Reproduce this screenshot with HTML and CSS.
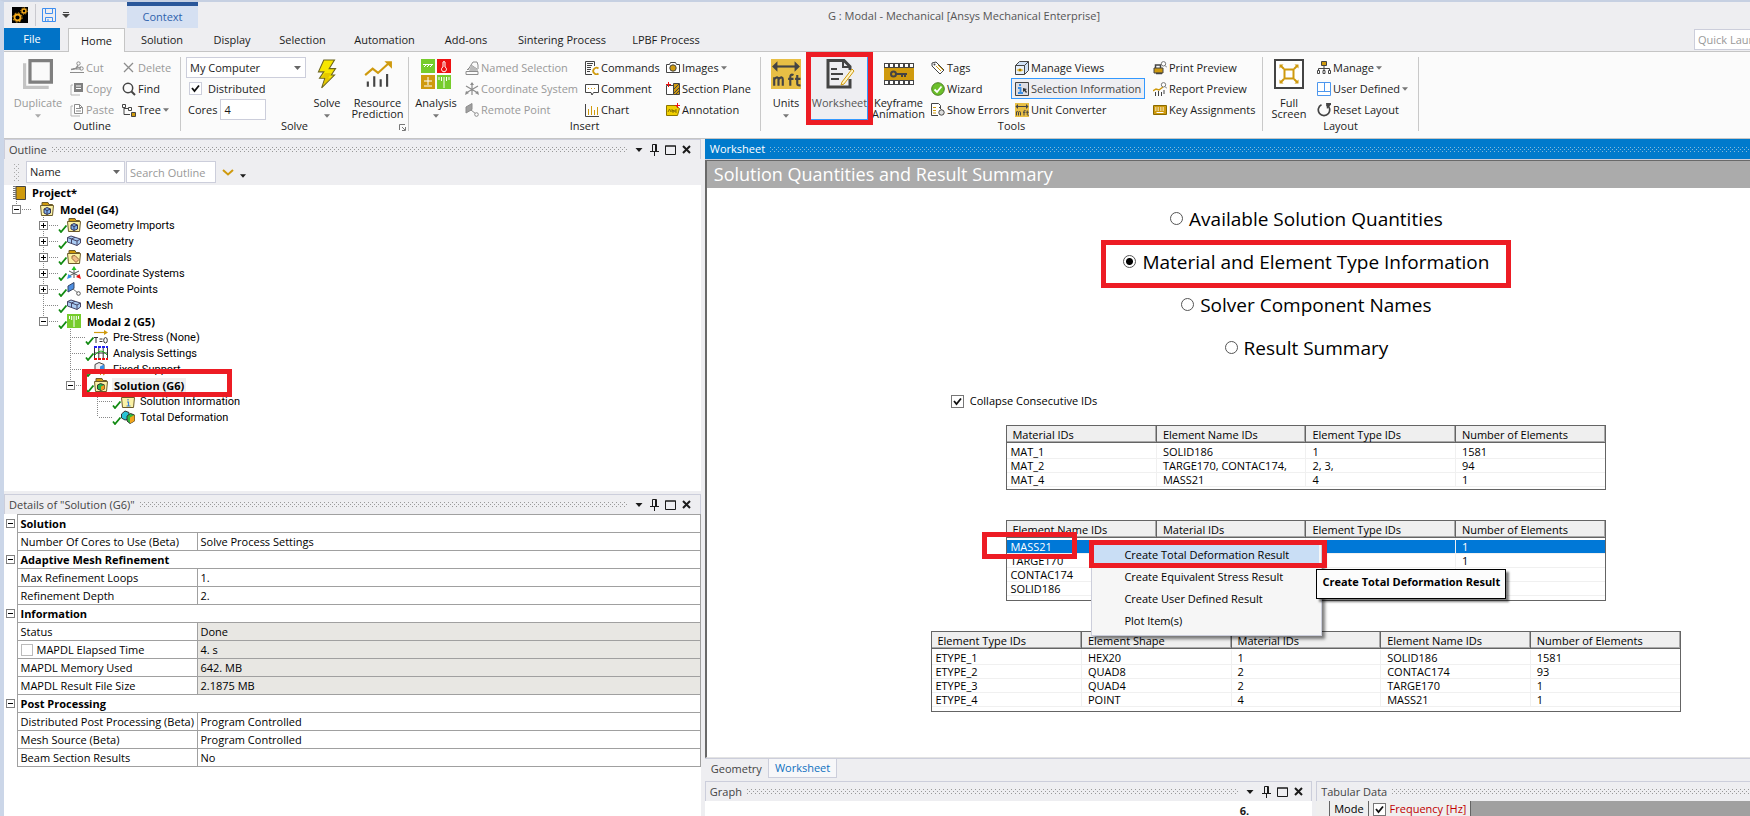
FILE: index.html
```html
<!DOCTYPE html>
<html lang="en">
<head>
    <meta charset="UTF-8">
    <meta name="viewport" content="width=device-width, initial-scale=1.0">
    <title>G : Modal - Mechanical [Ansys Mechanical Enterprise]</title>
    <link rel="stylesheet" href="styles.css">
</head>
<body>
    <!-- icon set -->
    <svg class="sprite" width="0" height="0" aria-hidden="true">
        <symbol id="i-arrow" viewBox="0 0 7 4"><path d="M0 0h7L3.500 4z" fill="currentColor"/></symbol>
        <symbol id="i-cut" viewBox="0 0 14 14"><path d="M0 11.500h14M3 8l8-2M6 8l5 0" stroke="#8c8c8c" fill="none"/><circle cx="8.500" cy="2.500" r="1.700" stroke="#8c8c8c" fill="none"/><circle cx="11.500" cy="7.500" r="1.700" stroke="#8c8c8c" fill="none"/><path d="M1 8.500l5-1 2-3" stroke="#8c8c8c" fill="none" stroke-width="1.500"/></symbol>
        <symbol id="i-copy" viewBox="0 0 14 14"><path d="M3 3H1v10h9" stroke="#b5b5b5" fill="none"/><path d="M4 1h9v9H4z" fill="#7f7f7f"/><path d="M6 4h5M6 6.500h5" stroke="#fff"/></symbol>
        <symbol id="i-paste" viewBox="0 0 14 14"><path d="M3 3H1v10h9" stroke="#b5b5b5" fill="none"/><path d="M4.500 1.500h5l3 3v6h-8z" fill="#fff" stroke="#8c8c8c"/><path d="M6 5.500h5M6 8h5M9.500 1.500v3h3" stroke="#8c8c8c" fill="none"/></symbol>
        <symbol id="i-delete" viewBox="0 0 14 14"><path d="M2 2l9 9M11 2l-9 9" stroke="#8c8c8c" stroke-width="1.300"/></symbol>
        <symbol id="i-find" viewBox="0 0 14 14"><circle cx="6" cy="6" r="4.700" fill="none" stroke="#444" stroke-width="1.500"/><path d="M9.500 9.500L13 13" stroke="#444" stroke-width="2"/></symbol>
        <symbol id="i-tree" viewBox="0 0 14 14"><path d="M.5 1.500h3v3h-3zM2 5v6.500h6M2 5.500h4" fill="none" stroke="#444"/><path d="M6.500 4.500h3v3h-3z" fill="#fff" stroke="#444"/><path d="M9.500 9.500h4v4h-4z" fill="#cf9a0e" stroke="#444"/></symbol>
        <symbol id="i-dup" viewBox="0 0 28 28"><path d="M0 4h3v21h21v3H0z" fill="#c4c4c4"/><path d="M6.500 1.500h20v20h-20z" fill="#fafafa" stroke="#7f7f7f" stroke-width="3"/></symbol>
        <symbol id="i-bolt" viewBox="0 0 20 28"><path d="M7 1h10l-5 8h6l-4 6h3L5 27l3-9H3l4-6H2z" fill="#f7e600" stroke="#6b6420"/><path d="M8 13h6l-3 5h3l-8 7 3-8H5z" fill="#d9b400" opacity=".6"/></symbol>
        <symbol id="i-resource" viewBox="0 0 28 26"><path d="M2 14l7-6 5 4 10-9" fill="none" stroke="#cf9a0e" stroke-width="2"/><path d="M20 1h7v7z" fill="#cf9a0e"/><path d="M4.500 20v5M10.500 15v10M16.500 18v7M22.500 13v12" stroke="#444" stroke-width="2"/></symbol>
        <symbol id="i-analysis" viewBox="0 0 30 30"><path d="M0 0h14v14H0z" fill="#76cc2c"/><path d="M16 0h14v14H16z" fill="#ee1111"/><path d="M0 16h14v14H0z" fill="#cf9a0e"/><path d="M16 16h14v14H16z" fill="#76cc2c"/><path d="M2 5.500h10M3 8l2-2M6 8l2-2M9 8l2-2M3 27h8M3 22h8M7 18v8M18 18v3M20.500 18v4M23 18v11M25.500 18v4M28 18v3" stroke="#fff" fill="none"/><path d="M22 3a1.500 1.500 0 0 1 2 0v5a2.500 2.500 0 1 1-2 0z" fill="none" stroke="#fff"/></symbol>
        <symbol id="i-named" viewBox="0 0 14 14"><path d="M1 10.500h12v3H1zM3 9l3-5 6 4v2M4 7l-2 2M6 4l2-3h4l1 3v4" fill="none" stroke="#8c8c8c"/><path d="M6 4l6 4-1 2H4z" fill="#bbb"/></symbol>
        <symbol id="i-coordg" viewBox="0 0 14 14"><path d="M7 1v12M1 4l12 7M13 4L1 11" stroke="#8c8c8c" stroke-width="1.200"/><path d="M5 3l2-3 2 3zM0 13l1-4 3 2zM14 13l-1-4-3 2z" fill="#8c8c8c"/></symbol>
        <symbol id="i-remoteg" viewBox="0 0 14 14"><path d="M1 4l6-3.500v6L1 10z" fill="#a0a0a0" stroke="#8c8c8c"/><path d="M6 7l5 4" stroke="#8c8c8c"/><circle cx="11.500" cy="11.500" r="1.800" fill="#fff" stroke="#8c8c8c"/></symbol>
        <symbol id="i-cmd" viewBox="0 0 14 14"><path d="M7 13.500H.5v-13h9V5" fill="none" stroke="#444"/><path d="M2 2.500h6M2 4.500h5M2 6.500h4M2 8.500h4M2 10.500h3" stroke="#444"/><path d="M13.500 7.500a3.200 3.200 0 1 0 0 5" fill="none" stroke="#cf9a0e" stroke-width="1.800"/></symbol>
        <symbol id="i-comment" viewBox="0 0 14 14"><path d="M.5 2.500h13v8h-5L7 13l-1-2.500H.5z" fill="#fff" stroke="#444"/><path d="M3 6.500h8" stroke="#cf9a0e" stroke-dasharray="1 2"/></symbol>
        <symbol id="i-chart" viewBox="0 0 14 14"><path d="M.5 1v12.500H14" fill="none" stroke="#444"/><path d="M3.500 6v6M6.500 3v9M9.500 7v5M12.500 4v8" stroke="#cf9a0e"/></symbol>
        <symbol id="i-images" viewBox="0 0 14 14"><path d="M.5 3.500h3l1-2h5l1 2h3v8H.500z" fill="#fff" stroke="#444"/><circle cx="7" cy="7" r="3.200" fill="#cf9a0e" stroke="#444"/></symbol>
        <symbol id="i-section" viewBox="0 0 14 14"><path d="M.5 3.500h7v9h-7z" fill="#fff" stroke="#444"/><path d="M7.500 1.500h6v11h-6z" fill="#cf9a0e" stroke="#444"/><path d="M8 7l5-5M8 11l5-5M10 12l3-3" stroke="#444"/><path d="M0 2.500h5M2.500 0v5" stroke="#e11"/></symbol>
        <symbol id="i-annot" viewBox="0 0 14 14"><path d="M.5 2.500h9l4 3-2 7H.500z" fill="#f0cf00" stroke="#8a7400"/><path d="M2 9l1.500-3L5 9M6 6v3h2V7.500H6M11 7H9v2h2" stroke="#8a7400" fill="none"/><path d="M9 2.500h5M11.500 0v5" stroke="#e11"/></symbol>
        <symbol id="i-units" viewBox="0 0 28 28"><path d="M0 0h28v28H0z" fill="#e8bf45"/><path d="M3 7h22" stroke="#444" stroke-width="2"/><path d="M6 2L1 7l5 5zM22 2l5 5-5 5z" fill="#444"/><path d="M3 25v-8M3 19c2-3 4-2 4 0v6M7 19c2-3 4-2 4 0v6M21 15c-2-1-3 0-3 2v8M16 18.500h5M24.500 15v8q0 2 3 1.500M22.500 18.500h5" stroke="#444" stroke-width="2" fill="none"/></symbol>
        <symbol id="i-sheet" viewBox="0 0 28 30"><path d="M24 20v8H2V1.500h16l6 6V11" fill="none" stroke="#444" stroke-width="3"/><path d="M17 1v7h7" fill="none" stroke="#444" stroke-width="2"/><path d="M5 10h6M5 15h12M5 20h8" stroke="#444" stroke-width="2"/><path d="M26 10l2 2-10 13-3 1 1-3z" fill="#fff3c4" stroke="#cf9a0e"/></symbol>
        <symbol id="i-key" viewBox="0 0 30 22"><path d="M0 0h30v22H0z" fill="#444"/><path d="M0 5h30v12H0z" fill="#cf9a0e"/><path d="M1 2.500h28M1 19.500h28" stroke="#fff" stroke-width="3" stroke-dasharray="3 2"/><circle cx="9.500" cy="11" r="2.500" fill="none" stroke="#444" stroke-width="2"/><path d="M12 11h11M18 11v3M21 11v3" stroke="#444" stroke-width="2"/></symbol>
        <symbol id="i-tags" viewBox="0 0 14 14"><path d="M1 2l4-1 8 8-4 4-8-8z" fill="#fff" stroke="#444"/><path d="M5 5l5 5M7 4l5 5" stroke="#cf9a0e"/><circle cx="3.500" cy="3.500" r="1" fill="#444"/></symbol>
        <symbol id="i-wizard" viewBox="0 0 14 14"><circle cx="7" cy="7" r="6.300" fill="#6bbf2a" stroke="#4a7f22"/><path d="M3.500 7.500L6 10l4.500-5.500" fill="none" stroke="#fff" stroke-width="1.800"/></symbol>
        <symbol id="i-errors" viewBox="0 0 14 14"><path d="M7 12.500H.5V.5h7l2 2V5" fill="#fff" stroke="#444"/><path d="M2 4.500h3M2 7.500h3M2 10h3" stroke="#cf9a0e"/><circle cx="10.500" cy="9.500" r="2.700" fill="#ddd" stroke="#444"/><path d="M8 4l2.500 2.500" stroke="#444"/></symbol>
        <symbol id="i-views" viewBox="0 0 14 14"><path d="M.5 4.500l4-4h9v9l-4 4v-9zM9.500 4.500l4-4" fill="#cfe0f6" stroke="#444"/><path d="M.5 4.500h9v9h-9z" fill="#e6effb" stroke="#444"/><path d="M1.500 9Q5 6 8.500 9 5 12 1.500 9z" fill="#e8bf45"/><circle cx="5" cy="9" r="1.200" fill="#a37b00"/></symbol>
        <symbol id="i-selinfo" viewBox="0 0 14 14"><path d="M.5.5h13v13H.5z" fill="#dcdce2" stroke="#444"/><path d="M3 6h2.500v5M3 11h5M4 3h2" stroke="#3a8ee6" stroke-width="1.800" fill="none"/><path d="M8 6l4 1-1.500 1L12 10l-1 1-1.500-2L8 10z" fill="#333"/></symbol>
        <symbol id="i-print" viewBox="0 0 14 14"><path d="M1 7h9v5H1z" fill="#cf9a0e" stroke="#444"/><path d="M2.500 7V4h5v3M3 12.500h6" fill="none" stroke="#444" stroke-width="1.500"/><circle cx="10.500" cy="2.800" r="2.200" fill="#fff" stroke="#777"/><path d="M12 4.500l2 2" stroke="#777"/></symbol>
        <symbol id="i-report" viewBox="0 0 14 14"><path d="M2.500 10v4M5.500 9v5M8.500 10v4M11 8v4" stroke="#444"/><path d="M0 9l3-2 3 1 4-3" stroke="#cf9a0e" stroke-width="1.500" fill="none"/><circle cx="10.500" cy="2.800" r="2.200" fill="#fff" stroke="#777"/><path d="M12 4.500l2 2" stroke="#777"/></symbol>
        <symbol id="i-keys" viewBox="0 0 14 14"><path d="M.5 2.500h13v9H.5z" fill="#cf9a0e" stroke="#8a6a00"/><path d="M2 5h10M2 7h10" stroke="#fff" stroke-dasharray="1.500 1"/><path d="M3.500 9.500h7" stroke="#fff"/></symbol>
        <symbol id="i-full" viewBox="0 0 30 30"><path d="M1 1h28v28H1z" fill="#fff" stroke="#444" stroke-width="2"/><path d="M10.500 10.500h9v9h-9z" fill="none" stroke="#cf9a0e" stroke-width="2"/><path d="M10 10L7 7M20 10l3-3M10 20l-3 3M20 20l3 3" stroke="#cf9a0e" stroke-width="2"/><path d="M5.500 5.500h4l-4 4zM24.500 5.500h-4l4 4zM5.500 24.500h4l-4-4zM24.500 24.500h-4l4-4z" fill="#cf9a0e"/></symbol>
        <symbol id="i-manage" viewBox="0 0 14 14"><path d="M4.500.5h5v4h-5z" fill="#cf9a0e" stroke="#444"/><path d="M7 5v5M1.500 10V7.500h11V10" fill="none" stroke="#444"/><path d="M.5 9.500h2v3h-2zM6 9.500h2v3H6zM11.500 9.500h2v3h-2z" fill="#fff" stroke="#444"/></symbol>
        <symbol id="i-user" viewBox="0 0 14 14"><path d="M.5.5h13v13H.5zM.5 9.500h13M7.500.5v9" fill="#fff" stroke="#4d97ee"/></symbol>
        <symbol id="i-reset" viewBox="0 0 14 14"><path d="M4.500 1.800a5.700 5.700 0 1 0 5 0" fill="none" stroke="#444" stroke-width="1.700"/><path d="M9 0h5v1.500L10 6z" fill="#444"/></symbol>
        <symbol id="i-gears" viewBox="0 0 16 16"><path d="M0 0h16v16H0z" fill="#000"/><circle cx="5.500" cy="10.500" r="3" fill="none" stroke="#f6ab1a" stroke-width="1.800"/><circle cx="5.500" cy="10.500" r="4.600" fill="none" stroke="#f6ab1a" stroke-dasharray="1.800 1.800"/><circle cx="12" cy="4" r="2" fill="none" stroke="#f6ab1a" stroke-width="1.400"/><circle cx="12" cy="4" r="3.200" fill="none" stroke="#f6ab1a" stroke-dasharray="1.200 1.200"/></symbol>
        <symbol id="i-save" viewBox="0 0 14 14"><path d="M.5.5h13v13H.5zM3.500.5v5h7v-5M3.500 13.500v-4h7v4M6 11v2" fill="none" stroke="#3f8ff0"/></symbol>
        <symbol id="i-more" viewBox="0 0 8 6"><path d="M1 .5h6" stroke="#444"/><path d="M0 2h8L4 6z" fill="#444"/></symbol>
        <symbol id="i-launch" viewBox="0 0 7 7"><path d="M.5 6V.5H6M3 3l3 3M6.500 3v3.500H3" fill="none" stroke="#777"/></symbol>
        <symbol id="i-pin" viewBox="0 0 9 12"><path d="M2.500 7V.5h4V7M0 7.500h9M4.500 8v4" fill="none" stroke="#1b1b1b"/><path d="M5.500 1v6" stroke="#1b1b1b"/></symbol>
        <symbol id="i-max" viewBox="0 0 11 10"><path d="M.5 1h10v8.500H.5z" fill="none" stroke="#1b1b1b"/><path d="M0 1h11" stroke="#1b1b1b"/></symbol>
        <symbol id="i-close" viewBox="0 0 9 9"><path d="M1 1l7 7M8 1L1 8" stroke="#1b1b1b" stroke-width="2"/></symbol>
        <symbol id="i-chev" viewBox="0 0 12 7"><path d="M1 1l5 4.500L11 1" fill="none" stroke="#cf9a0e" stroke-width="2"/></symbol>
        <!-- tree icons -->
        <symbol id="t-tick" viewBox="0 0 9 8"><path d="M1 4.500l2 2.500L8.500 .5" fill="none" stroke="#118a11" stroke-width="1.800"/></symbol>
        <symbol id="t-project" viewBox="0 0 14 14"><path d="M4 .5h9.500v13H4z" fill="#cf9a0e" stroke="#444"/><path d="M2.500 0v14" stroke="#777" stroke-width="3" stroke-dasharray="1 1"/></symbol>
        <symbol id="t-folder" viewBox="0 0 14 14"><path d="M2 3V.5h6L9 2.500h3.500V5" fill="#cf9a0e" stroke="#6b5a2a"/><path d="M.5 3.500h13l-1 10h-11z" fill="#fbf2a6" stroke="#6b5a2a"/></symbol>
        <symbol id="t-model" viewBox="0 0 14 14"><use href="#t-folder"/><path d="M4 7l3-1.500L10.500 7v4L7 12.500 4 11z" fill="#7fb1ee" stroke="#335"/><path d="M4 7l3 1.500L10.500 7M7 8.500v4" stroke="#335" fill="none"/></symbol>
        <symbol id="t-geom" viewBox="0 0 14 14"><path d="M.5 3.500L4 2l9.500 3v4L10 11.500.5 8z" fill="#a9cbf3" stroke="#446"/><path d="M.5 3.500L10 7l3.500-2M10 7v4.500M4.500 5v4.500M8 3.300L4.500 5" fill="none" stroke="#446"/></symbol>
        <symbol id="t-mat" viewBox="0 0 14 14"><use href="#t-folder"/><path d="M5 6l3-.5 4 4-3 3-4-4z" fill="#f0bd8a" stroke="#9a6a3a"/></symbol>
        <symbol id="t-coord" viewBox="0 0 14 14"><path d="M7 3v9M2 5l10 5M12 5L2 10" stroke="#555"/><path d="M4.500 4L7 0l2.500 4z" fill="#20c020"/><path d="M0 13l1.500-5L5 11z" fill="#3a8ee6"/><path d="M14 13l-1.500-5L9 11z" fill="#e11"/></symbol>
        <symbol id="t-remote" viewBox="0 0 14 14"><path d="M1 4l6-3.500v6L1 10z" fill="#4d8ee0" stroke="#346"/><path d="M6 7l5 4" stroke="#777"/><circle cx="11.500" cy="11.500" r="1.800" fill="#fff" stroke="#555"/></symbol>
        <symbol id="t-modal" viewBox="0 0 14 14"><path d="M0 0h14v14H0z" fill="#76cc2c"/><path d="M2.500 2v3M4.700 2v4M7 2v11M9.300 2v4M11.500 2v3" stroke="#fff"/></symbol>
        <symbol id="t-pre" viewBox="0 0 14 14"><path d="M0 2.500h11" stroke="#cf9a0e" stroke-width="1.200"/><path d="M10 0l4 2.500L10 5z" fill="#cf9a0e"/><path d="M0 7.500h4M2 7.500V13M5.500 9h3M5.500 11.500h3" stroke="#333"/><ellipse cx="11.500" cy="10.300" rx="1.800" ry="2.700" fill="none" stroke="#333"/></symbol>
        <symbol id="t-set" viewBox="0 0 14 14"><path d="M.5 2v10M4.800 2v10M9.200 2v10M13.500 2v10M0 7h14" stroke="#333"/><path d="M0 1h14" stroke="#22e" stroke-width="2" stroke-dasharray="3 1"/><path d="M0 13h14" stroke="#e11" stroke-width="2" stroke-dasharray="3 1"/><path d="M1 9q6-8 12 0" fill="none" stroke="#2b2"/></symbol>
        <symbol id="t-fixed" viewBox="0 0 14 14"><path d="M1 2.500L5 .5l5 2v7l-4 2-5-2z" fill="#eee" stroke="#444"/><path d="M6 4.500l4-2v7l-4 2z" fill="#3a8ee6"/><path d="M6 13l2-2M9 13l3-2" stroke="#cf9a0e"/></symbol>
        <symbol id="t-sol" viewBox="0 0 14 14"><use href="#t-folder"/><path d="M3.500 7l3-1.500 4 1.500v4L7 12.500 3.500 11z" fill="#27b04c" stroke="#333"/><path d="M7 8.500l3.500-1.500v4L7 12.500z" fill="#f29b1d"/></symbol>
        <symbol id="t-info" viewBox="0 0 14 14"><use href="#t-folder"/><path d="M7 5v1.500M6 8h1.500v4M5.500 12h4" stroke="#3a7ed6" stroke-width="1.200" fill="none"/></symbol>
        <symbol id="t-def" viewBox="0 0 14 14"><path d="M.5 4L4 1l4 1.500V9L4 10 .5 8z" fill="#2bc3d6" stroke="#333"/><path d="M6 6l3.500-2.500 4 1.500v6L9 13.500 6 11z" fill="#31b83c" stroke="#333"/><path d="M9 7.500L13.500 5v6L9 13.500z" fill="#f2a51d"/></symbol>
    </svg>

    <div class="app">
        <header class="title-bar">
            <svg class="logo"><use href="#i-gears"/></svg>
            <div class="quick">
                <button aria-label="Save"><svg class="ic"><use href="#i-save"/></svg></button>
                <button aria-label="More"><svg class="more"><use href="#i-more"/></svg></button>
            </div>
            <div class="context-tab">Context</div>
            <h1>G : Modal - Mechanical [Ansys Mechanical Enterprise]</h1>
        </header>
        <nav class="tabs">
            <button class="file">File</button>
            <button class="active">Home</button>
            <button>Solution</button>
            <button>Display</button>
            <button>Selection</button>
            <button>Automation</button>
            <button>Add-ons</button>
            <button>Sintering Process</button>
            <button>LPBF Process</button>
            <input class="launch" type="text" placeholder="Quick Launch" aria-label="Quick Launch">
        </nav>

        <div class="ribbon">
            <section class="group g-outline">
                <div class="tools">
                    <button class="big off"><svg class="i28"><use href="#i-dup"/></svg><span>Duplicate</span><svg class="dd"><use href="#i-arrow"/></svg></button>
                    <div class="col">
                        <button class="sm off"><svg class="ic"><use href="#i-cut"/></svg>Cut</button>
                        <button class="sm off"><svg class="ic"><use href="#i-copy"/></svg>Copy</button>
                        <button class="sm off"><svg class="ic"><use href="#i-paste"/></svg>Paste</button>
                    </div>
                    <div class="col">
                        <button class="sm off"><svg class="ic"><use href="#i-delete"/></svg>Delete</button>
                        <button class="sm"><svg class="ic"><use href="#i-find"/></svg>Find</button>
                        <button class="sm"><svg class="ic"><use href="#i-tree"/></svg>Tree<svg class="dd"><use href="#i-arrow"/></svg></button>
                    </div>
                </div>
                <h2>Outline</h2>
            </section>
            <section class="group g-solve">
                <div class="tools">
                    <div class="col form">
                        <select class="computer" aria-label="Solve on"><option>My Computer</option></select>
                        <label class="dist"><input type="checkbox" checked>Distributed</label>
                        <label class="cores">Cores<input type="text" value="4"></label>
                    </div>
                    <button class="big"><svg class="i28"><use href="#i-bolt"/></svg><span>Solve</span><svg class="dd"><use href="#i-arrow"/></svg></button>
                    <button class="big"><svg class="i28"><use href="#i-resource"/></svg><span>Resource Prediction</span></button>
                </div>
                <h2>Solve</h2>
                <button class="expand" aria-label="Solve options"><svg><use href="#i-launch"/></svg></button>
            </section>
            <section class="group g-insert">
                <div class="tools">
                    <button class="big"><svg class="i28"><use href="#i-analysis"/></svg><span>Analysis</span><svg class="dd"><use href="#i-arrow"/></svg></button>
                    <div class="col">
                        <button class="sm off"><svg class="ic"><use href="#i-named"/></svg>Named Selection</button>
                        <button class="sm off"><svg class="ic"><use href="#i-coordg"/></svg>Coordinate System</button>
                        <button class="sm off"><svg class="ic"><use href="#i-remoteg"/></svg>Remote Point</button>
                    </div>
                    <div class="col">
                        <button class="sm"><svg class="ic"><use href="#i-cmd"/></svg>Commands</button>
                        <button class="sm"><svg class="ic"><use href="#i-comment"/></svg>Comment</button>
                        <button class="sm"><svg class="ic"><use href="#i-chart"/></svg>Chart</button>
                    </div>
                    <div class="col">
                        <button class="sm"><svg class="ic"><use href="#i-images"/></svg>Images<svg class="dd"><use href="#i-arrow"/></svg></button>
                        <button class="sm"><svg class="ic"><use href="#i-section"/></svg>Section Plane</button>
                        <button class="sm"><svg class="ic"><use href="#i-annot"/></svg>Annotation</button>
                    </div>
                </div>
                <h2>Insert</h2>
            </section>
            <section class="group g-tools">
                <div class="tools">
                    <button class="big"><svg class="i28"><use href="#i-units"/></svg><span>Units</span><svg class="dd"><use href="#i-arrow"/></svg></button>
                    <button class="big pressed marked"><svg class="i28"><use href="#i-sheet"/></svg><span>Worksheet</span></button>
                    <button class="big"><svg class="i28"><use href="#i-key"/></svg><span>Keyframe Animation</span></button>
                    <div class="col">
                        <button class="sm"><svg class="ic"><use href="#i-tags"/></svg>Tags</button>
                        <button class="sm"><svg class="ic"><use href="#i-wizard"/></svg>Wizard</button>
                        <button class="sm"><svg class="ic"><use href="#i-errors"/></svg>Show Errors</button>
                    </div>
                    <div class="col">
                        <button class="sm"><svg class="ic"><use href="#i-views"/></svg>Manage Views</button>
                        <button class="sm toggled"><svg class="ic"><use href="#i-selinfo"/></svg>Selection Information</button>
                        <button class="sm"><svg class="ic"><use href="#i-units"/></svg>Unit Converter</button>
                    </div>
                    <div class="col">
                        <button class="sm"><svg class="ic"><use href="#i-print"/></svg>Print Preview</button>
                        <button class="sm"><svg class="ic"><use href="#i-report"/></svg>Report Preview</button>
                        <button class="sm"><svg class="ic"><use href="#i-keys"/></svg>Key Assignments</button>
                    </div>
                </div>
                <h2>Tools</h2>
            </section>
            <section class="group g-layout">
                <div class="tools">
                    <button class="big"><svg class="i28"><use href="#i-full"/></svg><span>Full Screen</span></button>
                    <div class="col">
                        <button class="sm"><svg class="ic"><use href="#i-manage"/></svg>Manage<svg class="dd"><use href="#i-arrow"/></svg></button>
                        <button class="sm"><svg class="ic"><use href="#i-user"/></svg>User Defined<svg class="dd"><use href="#i-arrow"/></svg></button>
                        <button class="sm"><svg class="ic"><use href="#i-reset"/></svg>Reset Layout</button>
                    </div>
                </div>
                <h2>Layout</h2>
            </section>
        </div>

        <main class="workspace">
            <div class="left">
                <section class="panel">
                    <div class="panel-head">
                        <h2>Outline</h2><span class="dots"></span>
                        <button aria-label="Menu"><svg class="w-menu"><use href="#i-arrow"/></svg></button>
                        <button aria-label="Pin"><svg class="w-pin"><use href="#i-pin"/></svg></button>
                        <button aria-label="Maximize"><svg class="w-max"><use href="#i-max"/></svg></button>
                        <button aria-label="Close"><svg class="w-close"><use href="#i-close"/></svg></button>
                    </div>
                    <div class="filter">
                        <span class="grip"></span>
                        <select aria-label="Filter by"><option>Name</option></select>
                        <input type="text" placeholder="Search Outline" aria-label="Search Outline">
                        <button aria-label="Expand"><svg class="chev"><use href="#i-chev"/></svg></button>
                        <button class="low" aria-label="Options"><svg class="w-opt"><use href="#i-arrow"/></svg></button>
                    </div>
                    <div class="tree">
                        <div class="root"><svg class="ic"><use href="#t-project"/></svg><b>Project*</b></div>
                        <ul>
                            <li>
                                <div class="node"><i class="box minus"></i><i class="dash"></i><svg class="tick"></svg><svg class="ic"><use href="#t-model"/></svg><b>Model (G4)</b></div>
                                <ul>
                                    <li><div class="node"><i class="box plus"></i><i class="dash"></i><svg class="tick"><use href="#t-tick"/></svg><svg class="ic"><use href="#t-model"/></svg><span>Geometry Imports</span></div></li>
                                    <li><div class="node"><i class="box plus"></i><i class="dash"></i><svg class="tick"><use href="#t-tick"/></svg><svg class="ic"><use href="#t-geom"/></svg><span>Geometry</span></div></li>
                                    <li><div class="node"><i class="box plus"></i><i class="dash"></i><svg class="tick"><use href="#t-tick"/></svg><svg class="ic"><use href="#t-mat"/></svg><span>Materials</span></div></li>
                                    <li><div class="node"><i class="box plus"></i><i class="dash"></i><svg class="tick"><use href="#t-tick"/></svg><svg class="ic"><use href="#t-coord"/></svg><span>Coordinate Systems</span></div></li>
                                    <li><div class="node"><i class="box plus"></i><i class="dash"></i><svg class="tick"><use href="#t-tick"/></svg><svg class="ic"><use href="#t-remote"/></svg><span>Remote Points</span></div></li>
                                    <li><div class="node"><i class="dash long"></i><svg class="tick"><use href="#t-tick"/></svg><svg class="ic"><use href="#t-geom"/></svg><span>Mesh</span></div></li>
                                    <li>
                                        <div class="node"><i class="box minus"></i><i class="dash"></i><svg class="tick"><use href="#t-tick"/></svg><svg class="ic"><use href="#t-modal"/></svg><b>Modal 2 (G5)</b></div>
                                        <ul>
                                            <li><div class="node"><i class="dash long"></i><svg class="tick"><use href="#t-tick"/></svg><svg class="ic"><use href="#t-pre"/></svg><span>Pre-Stress (None)</span></div></li>
                                            <li><div class="node"><i class="dash long"></i><svg class="tick"><use href="#t-tick"/></svg><svg class="ic"><use href="#t-set"/></svg><span>Analysis Settings</span></div></li>
                                            <li><div class="node"><i class="dash long"></i><svg class="tick"><use href="#t-tick"/></svg><svg class="ic"><use href="#t-fixed"/></svg><span>Fixed Support</span></div></li>
                                            <li>
                                                <div class="node marked"><i class="box minus"></i><i class="dash"></i><svg class="tick"><use href="#t-tick"/></svg><svg class="ic"><use href="#t-sol"/></svg><b class="sel">Solution (G6)</b></div>
                                                <ul>
                                                    <li><div class="node"><i class="dash long"></i><svg class="tick"><use href="#t-tick"/></svg><svg class="ic"><use href="#t-info"/></svg><span>Solution Information</span></div></li>
                                                    <li><div class="node"><i class="dash long"></i><svg class="tick"><use href="#t-tick"/></svg><svg class="ic"><use href="#t-def"/></svg><span>Total Deformation</span></div></li>
                                                </ul>
                                            </li>
                                        </ul>
                                    </li>
                                </ul>
                            </li>
                        </ul>
                    </div>
                </section>

                <section class="panel">
                    <div class="panel-head">
                        <h2>Details of "Solution (G6)"</h2><span class="dots"></span>
                        <button aria-label="Menu"><svg class="w-menu"><use href="#i-arrow"/></svg></button>
                        <button aria-label="Pin"><svg class="w-pin"><use href="#i-pin"/></svg></button>
                        <button aria-label="Maximize"><svg class="w-max"><use href="#i-max"/></svg></button>
                        <button aria-label="Close"><svg class="w-close"><use href="#i-close"/></svg></button>
                    </div>
                    <div class="details">
                        <table>
                            <colgroup><col class="c-box"><col class="c-name"><col></colgroup>
                            <tr><td><i class="box minus"></i></td><th colspan="2">Solution</th></tr>
                            <tr><td></td><td>Number Of Cores to Use (Beta)</td><td>Solve Process Settings</td></tr>
                            <tr><td><i class="box minus"></i></td><th colspan="2">Adaptive Mesh Refinement</th></tr>
                            <tr><td></td><td>Max Refinement Loops</td><td>1.</td></tr>
                            <tr><td></td><td>Refinement Depth</td><td>2.</td></tr>
                            <tr><td><i class="box minus"></i></td><th colspan="2">Information</th></tr>
                            <tr class="ro"><td></td><td>Status</td><td>Done</td></tr>
                            <tr class="ro"><td></td><td><label><input type="checkbox">MAPDL Elapsed Time</label></td><td>4. s</td></tr>
                            <tr class="ro"><td></td><td>MAPDL Memory Used</td><td>642. MB</td></tr>
                            <tr class="ro"><td></td><td>MAPDL Result File Size</td><td>2.1875 MB</td></tr>
                            <tr><td><i class="box minus"></i></td><th colspan="2">Post Processing</th></tr>
                            <tr><td></td><td>Distributed Post Processing (Beta)</td><td>Program Controlled</td></tr>
                            <tr><td></td><td>Mesh Source (Beta)</td><td>Program Controlled</td></tr>
                            <tr><td></td><td>Beam Section Results</td><td>No</td></tr>
                        </table>
                    </div>
                </section>
            </div>

            <div class="right">
                <section class="sheet">
                    <div class="panel-head blue"><h2>Worksheet</h2><span class="dots"></span></div>
                    <div class="sheet-body">
                        <h3>Solution Quantities and Result Summary</h3>
                        <div class="doc">
                            <div class="radios">
                                <label><input type="radio" name="view">Available Solution Quantities</label>
                                <label class="marked"><input type="radio" name="view" checked>Material and Element Type Information</label>
                                <label><input type="radio" name="view">Solver Component Names</label>
                                <label><input type="radio" name="view">Result Summary</label>
                            </div>
                            <label class="collapse"><input type="checkbox" checked>Collapse Consecutive IDs</label>

                            <table class="list">
                                <thead><tr><th>Material IDs</th><th>Element Name IDs</th><th>Element Type IDs</th><th>Number of Elements</th></tr></thead>
                                <tbody>
                                    <tr><td>MAT_1</td><td>SOLID186</td><td>1</td><td>1581</td></tr>
                                    <tr><td>MAT_2</td><td>TARGE170, CONTAC174,</td><td>2, 3,</td><td>94</td></tr>
                                    <tr><td>MAT_4</td><td>MASS21</td><td>4</td><td>1</td></tr>
                                </tbody>
                            </table>

                            <div class="with-menu">
                                <table class="list tall">
                                    <thead><tr><th>Element Name IDs</th><th>Material IDs</th><th>Element Type IDs</th><th>Number of Elements</th></tr></thead>
                                    <tbody>
                                        <tr class="selected"><td class="marked">MASS21</td><td></td><td></td><td>1</td></tr>
                                        <tr><td>TARGE170</td><td></td><td></td><td>1</td></tr>
                                        <tr><td>CONTAC174</td><td></td><td></td><td></td></tr>
                                        <tr><td>SOLID186</td><td></td><td></td><td></td></tr>
                                    </tbody>
                                </table>
                                <div class="menu">
                                    <button class="hover marked">Create Total Deformation Result</button>
                                    <button>Create Equivalent Stress Result</button>
                                    <button>Create User Defined Result</button>
                                    <button>Plot Item(s)</button>
                                </div>
                                <div class="tip">Create Total Deformation Result</div>
                            </div>

                            <table class="list tall five">
                                <thead><tr><th>Element Type IDs</th><th>Element Shape</th><th>Material IDs</th><th>Element Name IDs</th><th>Number of Elements</th></tr></thead>
                                <tbody>
                                    <tr><td>ETYPE_1</td><td>HEX20</td><td>1</td><td>SOLID186</td><td>1581</td></tr>
                                    <tr><td>ETYPE_2</td><td>QUAD8</td><td>2</td><td>CONTAC174</td><td>93</td></tr>
                                    <tr><td>ETYPE_3</td><td>QUAD4</td><td>2</td><td>TARGE170</td><td>1</td></tr>
                                    <tr><td>ETYPE_4</td><td>POINT</td><td>4</td><td>MASS21</td><td>1</td></tr>
                                </tbody>
                            </table>
                        </div>
                    </div>
                </section>
                <div class="view-tabs">
                    <button>Geometry</button>
                    <button class="active">Worksheet</button>
                </div>
                <div class="bottom">
                    <section class="panel">
                        <div class="panel-head">
                            <h2>Graph</h2><span class="dots"></span>
                            <button aria-label="Menu"><svg class="w-menu"><use href="#i-arrow"/></svg></button>
                            <button aria-label="Pin"><svg class="w-pin"><use href="#i-pin"/></svg></button>
                            <button aria-label="Maximize"><svg class="w-max"><use href="#i-max"/></svg></button>
                            <button aria-label="Close"><svg class="w-close"><use href="#i-close"/></svg></button>
                        </div>
                        <div class="graph">6.</div>
                    </section>
                    <section class="panel">
                        <div class="panel-head cut"><h2>Tabular Data</h2><span class="dots"></span></div>
                        <div class="tabular">
                            <span class="corner"></span>
                            <span class="mode">Mode</span>
                            <label><input type="checkbox" checked>Frequency [Hz]</label>
                        </div>
                    </section>
                </div>
            </div>
        </main>
    </div>
</body>
</html>
```
FILE: styles.css
```css
*, *::after{
    margin: 0;
    padding: 0;
    box-sizing: border-box;
}
ul{
    list-style: none;
}
body{
    font: 11px/16px "Open Sans", "Noto Sans", sans-serif;
    color: #1b1b1b;
    background-color: #eeeef1;
    overflow: hidden;
}
button, input, select{
    font: inherit;
    color: inherit;
}
button{
    border: 0;
    background: none;
}
h1, h2, h3{
    font-size: inherit;
    font-weight: normal;
}
svg{
    display: block;
    flex: none;
}
.sprite{
    position: absolute;
}
.app{
    height: 100vh;
    display: flex;
    flex-direction: column;
    border-top: 2px solid #c6d0e2;
    border-left: 4px solid #cbd6e8;
}
.ic{
    width: 14px;
    height: 14px;
}
.dd{
    width: 6px;
    height: 4px;
    color: #777;
}

/* red call-out frames */
.marked{
    position: relative;
}
.marked::after{
    content: "";
    position: absolute;
    border: 5px solid #ed1c24;
    z-index: 5;
    pointer-events: none;
}

/* title bar */
.title-bar{
    height: 26px;
    display: flex;
    align-items: center;
    padding-right: 20px;
}
.logo{
    width: 16px;
    height: 16px;
    margin-left: 8px;
}
.quick{
    display: flex;
    align-items: center;
    gap: 6px;
    width: 92px;
    height: 22px;
    margin-left: 7px;
    padding-left: 6px;
    border-left: 1px solid #c9c9cf;
}
.more{
    width: 8px;
    height: 6px;
}
.context-tab{
    align-self: stretch;
    width: 71px;
    text-align: center;
    line-height: 22px;
    color: #2f62ad;
    background-color: #d5e0f2;
    border-top: 4px solid #2a579a;
}
.title-bar h1{
    flex: 1;
    text-align: center;
    line-height: 18px;
    padding-top: 2px;
    color: #555;
}

/* tabs */
.tabs{
    height: 24px;
    display: grid;
    grid-template-columns: 56px 57px 74px 66px 75px 89px 74px 118px 90px 1fr;
    border-bottom: 1px solid #c5c5c5;
}
.tabs .file{
    color: #fff;
    background-color: #0173c7;
    margin-bottom: 1px;
}
.tabs .active{
    background-color: #fbfbfb;
    border: 1px solid #c5c5c5;
    border-bottom: 0;
    margin-bottom: -1px;
}
.tabs .file ~ button{
    margin-left: 8px;
    margin-right: -8px;
}
.launch{
    justify-self: end;
    width: 100px;
    height: 21px;
    margin-top: 1px;
    margin-right: -44px;
    padding-left: 3px;
    border: 1px solid #cccedb;
    background-color: #fff;
}
::placeholder{
    color: #999;
    opacity: 1;
}

/* ribbon */
.ribbon{
    display: flex;
    height: 87px;
    padding: 5px 0 7px;
    background-color: #fbfbfb;
    border-bottom: 1px solid #c5c5c5;
}
.group{
    position: relative;
    border-right: 1px solid #c9c9c9;
}
.group h2{
    text-align: center;
    line-height: 12px;
}
.tools{
    display: grid;
    height: 63px;
}
.g-outline .tools{
    padding-left: 4px;
    grid-template-columns: 60px 52px 60px;
}
.g-solve .tools{
    grid-template-columns: 126px 40px 61px;
}
.g-insert .tools{
    grid-template-columns: 54px 120px 81px 96px;
}
.g-tools .tools{
    grid-template-columns: 50px 57px 61px 84px 138px 111px;
}
.g-layout .tools{
    grid-template-columns: 52px 103px;
}
.col{
    display: flex;
    flex-direction: column;
    align-items: flex-start;
}
.sm{
    display: flex;
    align-items: center;
    gap: 2px;
    height: 21px;
    padding: 0 2px;
    white-space: nowrap;
}
.big{
    display: flex;
    flex-direction: column;
    align-items: center;
    line-height: 11px;
}
.big .i28{
    width: 30px;
    height: 30px;
    margin: 2px 0 8px;
}
.big .dd{
    margin-top: 6px;
}
.off{
    color: #999;
}
.off .dd{
    color: #aaa;
}
.toggled{
    color: #444;
    background-color: #eeeef2;
    box-shadow: 0 0 0 1px #3399ff inset;
    padding: 0 4px;
    margin-left: -2px;
}
.pressed{
    color: #555;
    background-color: #eeeef2;
    box-shadow: -1px -1px #3399ff inset;
}
.pressed::after{
    inset: -5px;
}
.form{
    padding-left: 5px;
}
select{
    appearance: none;
    border: 1px solid #cccedb;
    border-radius: 0;
    padding-left: 3px;
    background: #fff url("data:image/svg+xml,%3Csvg xmlns='http://www.w3.org/2000/svg' width='7' height='4'%3E%3Cpath d='M0 0h7L3.500 4z' fill='%23666'/%3E%3C/svg%3E") no-repeat right 4px center;
}
.computer{
    width: 120px;
    height: 21px;
}
.dist, .cores{
    display: flex;
    align-items: center;
    height: 21px;
}
.dist{
    gap: 6px;
    padding-left: 3px;
}
.cores{
    gap: 3px;
    padding-left: 2px;
}
.cores input{
    width: 46px;
    height: 21px;
    padding-left: 3px;
    border: 1px solid #cccedb;
    background-color: #fff;
}
input[type=checkbox]{
    appearance: none;
    flex: none;
    width: 13px;
    height: 13px;
    border: 1px solid #777;
    background-color: #fff;
}
input[type=checkbox]:checked{
    background-image: url("data:image/svg+xml,%3Csvg xmlns='http://www.w3.org/2000/svg' viewBox='0 0 11 11'%3E%3Cpath d='M2 5l2.500 3L9 2.500' fill='none' stroke='%23111' stroke-width='1.800'/%3E%3C/svg%3E");
}
.dist input[type=checkbox]{
    border-color: #cccedb;
}
.expand{
    position: absolute;
    right: 2px;
    bottom: 0;
}
.expand svg{
    width: 7px;
    height: 7px;
}

/* workspace */
.workspace{
    flex: 1;
    min-height: 0;
    display: grid;
    grid-template-columns: 2fr 3fr;
    gap: 4px;
}
.left{
    display: grid;
    grid-template-rows: minmax(0, 1fr) 322px;
    gap: 3px;
    min-height: 0;
}
.panel{
    display: flex;
    flex-direction: column;
    min-width: 0;
    min-height: 0;
}
.panel-head{
    display: flex;
    align-items: center;
    height: 20px;
    flex: none;
    padding: 0 5px 0 4px;
    color: #444;
    border: 1px solid #cccedb;
    border-bottom: 0;
}
.panel-head button{
    display: flex;
    justify-content: center;
    width: 16px;
    color: #1b1b1b;
}
.dots{
    flex: 1;
    height: 5px;
    margin: 0 4px 0 5px;
    background: repeating-linear-gradient(90deg, #999 0 1px, transparent 1px 4px) 0 0 / 100% 1px no-repeat,
        repeating-linear-gradient(90deg, transparent 0 2px, #999 2px 3px, transparent 3px 4px) 0 2px / 100% 1px no-repeat,
        repeating-linear-gradient(90deg, #999 0 1px, transparent 1px 4px) 0 4px / 100% 1px no-repeat;
}
.cut{
    padding-right: 0;
    border-right: 0;
}
.cut .dots{
    margin-right: 0;
}
.w-menu{
    width: 8px;
    height: 4px;
}
.w-pin{
    width: 9px;
    height: 12px;
}
.w-max{
    width: 11px;
    height: 10px;
}
.w-close{
    width: 9px;
    height: 9px;
}
.filter{
    display: flex;
    align-items: center;
    height: 26px;
    flex: none;
    padding-left: 10px;
    gap: 1px;
}
.grip{
    width: 5px;
    height: 17px;
    margin-right: 6px;
    background: repeating-linear-gradient(#aaa 0 1px, transparent 1px 4px) 0 0 / 1px 100% no-repeat,
        repeating-linear-gradient(transparent 0 2px, #aaa 2px 3px, transparent 3px 4px) 2px 0 / 1px 100% no-repeat,
        repeating-linear-gradient(#aaa 0 1px, transparent 1px 4px) 4px 0 / 1px 100% no-repeat;
}
.filter select{
    width: 99px;
    height: 22px;
}
.filter input{
    width: 90px;
    height: 22px;
    padding-left: 3px;
    border: 1px solid #cccedb;
    background-color: #fff;
}
.filter button{
    margin-left: 5px;
}
.filter .low{
    align-self: flex-end;
    padding-bottom: 7px;
}
.chev{
    width: 12px;
    height: 7px;
}
.w-opt{
    width: 6px;
    height: 4px;
}

/* outline tree */
.tree{
    flex: 1;
    background-color: #fff;
    color: #000;
    padding-left: 8px;
}
.root{
    display: flex;
    align-items: center;
    gap: 6px;
    height: 16px;
}
.tree ul ul{
    padding-left: 27px;
}
.tree li{
    background: repeating-linear-gradient(#888 0 1px, transparent 1px 2px) 4px 0 / 1px 100% no-repeat;
}
.tree li:last-child{
    background-size: 1px 8px;
}
.node{
    display: flex;
    align-items: center;
    height: 16px;
}
.node .ic{
    margin-right: 4px;
}
.node span, .node b{
    padding: 0 2px;
    line-height: 15px;
}
.node span{
    font-family: Roboto, "Open Sans", sans-serif;
    padding-left: 1px;
}
.node .sel{
    background-color: #f0f0f0;
}
.node.marked::after{
    left: 16px;
    top: -8px;
    width: 150px;
    height: 28px;
}
.box{
    display: block;
    width: 9px;
    height: 9px;
    border: 1px solid #808080;
    background: linear-gradient(#000 0 0) center / 5px 1px no-repeat #fff;
}
.plus{
    background: linear-gradient(#000 0 0) center / 5px 1px no-repeat, linear-gradient(#000 0 0) center / 1px 5px no-repeat #fff;
}
.dash{
    width: 10px;
    height: 1px;
    background: repeating-linear-gradient(90deg, transparent 0 1px, #888 1px 2px);
}
.long{
    width: 14px;
    margin-left: 5px;
}
.tick{
    width: 9px;
    height: 8px;
    align-self: flex-end;
}

/* details grid */
.details{
    flex: 1;
    background-color: #fff;
    color: #000;
}
.details table{
    width: 100%;
    border-collapse: collapse;
    table-layout: fixed;
}
.c-box{
    width: 13px;
}
.c-name{
    width: 180px;
}
.details td, .details th{
    height: 18px;
    padding: 0 3px;
    line-height: 15px;
    text-align: left;
    white-space: nowrap;
    border: 1px solid #a0a0a0;
}
.details td:first-child{
    padding: 0 2px;
    border-width: 0 1px 0 0;
}
.details .ro td:last-child{
    background-color: #e8e7e3;
}
.details label{
    display: flex;
    align-items: center;
    gap: 4px;
}
.details input[type=checkbox]{
    width: 12px;
    height: 12px;
    border-color: #bbb;
}

/* worksheet */
.right{
    display: flex;
    flex-direction: column;
    min-width: 0;
    min-height: 0;
}
.sheet{
    flex: 1;
    min-height: 0;
    display: flex;
    flex-direction: column;
}
.blue{
    height: 21px;
    color: #fff;
    background-color: #007acc;
    border: 0;
    border-bottom: 1px solid #cccedb;
    padding: 0 0 0 5px;
}
.blue .dots{
    margin-right: 0;
    opacity: .6;
    filter: brightness(1.5);
}
.sheet-body{
    flex: 1;
    background-color: #fff;
    border-top: 1px solid #696969;
    border-left: 2px solid #696969;
    border-bottom: 1px solid #e3e3e3;
}
.sheet-body h3{
    height: 27px;
    padding-left: 7px;
    font-size: 18px;
    line-height: 27px;
    color: #fff;
    background-color: #ababab;
}
.doc{
    padding: 9px 0 0 156px;
    color: #000;
}
.radios{
    display: flex;
    flex-direction: column;
    align-items: center;
}
.radios label{
    display: flex;
    align-items: center;
    gap: 6px;
    height: 43px;
    font-size: 19px;
}
.radios input{
    appearance: none;
    width: 13px;
    height: 13px;
    border: 1px solid #555;
    border-radius: 50%;
}
.radios input:checked{
    background: radial-gradient(circle, #000 3px, #fff 4px);
}
.radios .marked::after{
    inset: 0 -22px -5px;
}
.collapse{
    display: flex;
    align-items: center;
    gap: 6px;
    height: 16px;
    margin: 24px 0 16px 88px;
}
.list{
    width: 600px;
    margin: 0 auto 30px;
    border: 1px solid #646464;
    border-spacing: 0;
    table-layout: fixed;
    padding-bottom: 2px;
    background-color: #fff;
    line-height: 13px;
}
.tall{
    padding-bottom: 4px;
}
.five{
    width: 750px;
}
.list th{
    height: 17px;
    padding-left: 6px;
    text-align: left;
    font-weight: normal;
    background-color: #efefef;
    border-right: 1px solid #646464;
    border-bottom: 1px solid #646464;
    box-shadow: -1px -1px #a9a9a9 inset;
}
.list th:first-child{
    padding-left: 5px;
}
.list th:last-child{
    border-right: 0;
}
.list td{
    height: 14px;
    padding-left: 6px;
    border-right: 1px solid #f0f0f0;
    border-bottom: 1px solid #f0f0f0;
}
.list td:first-child{
    padding-left: 3px;
}
.list td:last-child{
    border-right: 0;
}
.list tbody tr:first-child td{
    height: 16px;
    border-top: 2px solid #fff;
}
.list .selected td{
    color: #fff;
    background-color: #0078d7;
    background-clip: padding-box;
}
.list .marked::after{
    left: -25px;
    top: -8px;
    width: 95px;
    height: 27px;
}
.with-menu{
    position: relative;
    width: 600px;
    margin: 0 auto;
}
.menu{
    position: absolute;
    left: 85px;
    top: 20px;
    width: 231px;
    padding: 3px 2px;
    background-color: #f6f6f6;
    border: 1px solid #cccedb;
    box-shadow: 3px 3px 3px rgba(0, 0, 0, .5);
}
.menu button{
    display: block;
    width: 100%;
    height: 22px;
    padding-left: 30px;
    text-align: left;
}
.menu .hover{
    background-color: #c9def5;
}
.menu .marked::after{
    inset: -4px -8px -2px -5px;
}
.tip{
    position: absolute;
    left: 310px;
    top: 49px;
    height: 30px;
    padding: 0 5px;
    line-height: 24px;
    font-weight: bold;
    white-space: nowrap;
    background-color: #fcfcfc;
    border: 1px solid #000;
    box-shadow: 3px 3px 2px rgba(0, 0, 0, .5);
    z-index: 6;
}

/* bottom */
.view-tabs{
    display: flex;
    height: 20px;
    margin-bottom: 3px;
    border-top: 1px solid #cccedb;
}
.view-tabs button{
    padding: 0 6px;
    color: #444;
}
.view-tabs .active{
    color: #0e70c0;
    background-color: #f7f7f9;
    border: 1px solid #cccedb;
    border-top: 0;
}
.bottom{
    display: grid;
    grid-template-columns: 7fr 5fr;
    gap: 4px;
    height: 35px;
}
.graph{
    flex: 1;
    padding-left: 535px;
    background-color: #fff;
    font-weight: bold;
    line-height: 20px;
}
.tabular{
    flex: 1;
    display: flex;
    color: #000;
    background-color: #a0a0a0;
}
.tabular span, .tabular label{
    display: flex;
    align-items: center;
    padding: 0 4px;
    background-color: #efefef;
    border-right: 1px solid #646464;
}
.corner{
    width: 14px;
}
.tabular label{
    gap: 4px;
    color: #c00000;
}
```
